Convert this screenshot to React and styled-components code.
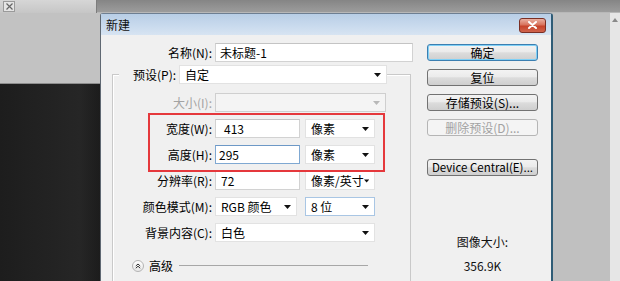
import React from "react";
import styled, { createGlobalStyle, css } from "styled-components";

const GlobalStyle = createGlobalStyle`
  html, body { margin: 0; padding: 0; width: 620px; height: 281px; overflow: hidden; background: #c0c0c0; }
  body { font-family: "Noto Sans CJK SC", "Noto Sans", sans-serif; font-size: 12px; color: #000; }
  * { box-sizing: border-box; }
`;

const Page = styled.div`
  width: 620px;
  height: 281px;
  display: flex;
  flex-direction: column;
  overflow: hidden;
`;

const TopStrip = styled.div`
  height: 13px;
  display: flex;
  flex: none;
`;

const TopLeft = styled.div`
  width: 97px;
  background: linear-gradient(#d6d6d6, #c6c6c6);
  padding: 1px 0 0 3px;
  border-right: 1px solid #7d7d7d;
`;

const TopRest = styled.div`
  flex: 1;
  background: linear-gradient(#858585, #9c9c9c);
  border-bottom: 1px solid #b8b8b8;
`;

const TinyClose = styled.div`
  width: 12px;
  height: 11px;
  border: 1px solid #9a9a9a;
  background: #e4e4e4;
  display: flex;
  align-items: center;
  justify-content: center;
`;

const Main = styled.div`
  flex: 1;
  display: flex;
  min-height: 0;
`;

const LeftPane = styled.div`
  width: 100px;
  display: flex;
  flex-direction: column;
`;

const LightArea = styled.div`
  height: 71px;
  background: #c2c2c2;
  border-bottom: 1px solid #8d8d8d;
`;

const DarkArea = styled.div`
  flex: 1;
  background: linear-gradient(90deg, #1d1d1d, #262626 80%, #1c1c1c);
`;

const Dialog = styled.div`
  width: 453px;
  display: flex;
  flex-direction: column;
  background: #f0f0f0;
  border-left: 1px solid #5f6872;
  border-right: 2px solid #2f5c76;
  border-top: 1px solid #6e7f92;
  border-top-left-radius: 3px;
  border-top-right-radius: 3px;
`;

const TitleBar = styled.div`
  height: 21px;
  flex: none;
  display: flex;
  align-items: center;
  justify-content: space-between;
  padding: 0 5px 0 5px;
  background: linear-gradient(#b8cee6, #cadbee 60%, #d7e4f2);
`;

const Title = styled.span`
  font-size: 12px;
  color: #111;
`;

const CloseButton = styled.div`
  width: 27px;
  height: 15px;
  margin-top: 1px;
  border: 1px solid #7a2f24;
  border-radius: 3px;
  background: linear-gradient(#eab0a2, #d8735d 45%, #c7432b 55%, #d0644c);
  display: flex;
  align-items: center;
  justify-content: center;
`;

const Body = styled.div`
  flex: 1;
  display: flex;
  padding-top: 8px;
  min-height: 0;
`;

const FormCol = styled.div`
  width: 320px;
  display: flex;
  flex-direction: column;
`;

const Row = styled.div`
  display: flex;
  align-items: center;
  height: 19px;
  margin-top: ${(p) => p.$mt || 0}px;
`;

const Label = styled.div`
  width: ${(p) => p.$w}px;
  flex: none;
  text-align: right;
  margin-right: 3px;
  white-space: nowrap;
  color: ${(p) => (p.$disabled ? "#a3a3a3" : "#000")};
  line-height: 19px;
`;

const fieldBase = css`
  height: 19px;
  flex: none;
  background: #fff;
  line-height: 17px;
  white-space: nowrap;
`;

const TextField = styled.div`
  ${fieldBase};
  width: ${(p) => p.$w}px;
  padding-left: ${(p) => p.$indent ?? 4}px;
  border: 1px solid ${(p) => (p.$focus ? "#7fa8d2" : "#d2d2d2")};
  border-top-color: ${(p) => (p.$focus ? "#6d98c6" : "#c4c4c4")};
`;

const SelectBox = styled.div`
  ${fieldBase};
  width: ${(p) => p.$w}px;
  margin-left: ${(p) => p.$ml || 0}px;
  display: flex;
  align-items: center;
  justify-content: space-between;
  padding: 0 5px 0 5px;
  border: 1px solid ${(p) => (p.$focus ? "#a9c6e4" : "#e2e2e2")};
  background: ${(p) => (p.$disabled ? "#f4f4f4" : "#fff")};
  ${(p) =>
    p.$disabled &&
    css`
      border-color: #cfcfcf;
    `}
`;

const GroupBox = styled.div`
  margin: 12px 0 0 11px;
  width: 299px;
  border: 1px solid #c9c9c9;
  box-shadow: inset 1px 1px 0 #fff;
  padding-bottom: 40px;
  display: flex;
  flex-direction: column;
`;

const Legend = styled.div`
  display: flex;
  align-items: center;
  height: 19px;
  margin: -10px 0 0 6px;
  padding-left: 14px;
  width: fit-content;
  background: #f0f0f0;
`;

const LegendLabel = styled.span`
  margin-right: 3px;
  white-space: nowrap;
`;

const Highlight = styled.div`
  position: relative;
  margin-top: 7px;
  display: flex;
  flex-direction: column;
  gap: 7px;
  &::after {
    content: "";
    position: absolute;
    top: -6px;
    left: 35px;
    width: 233px;
    height: 55px;
    border: 2px solid #e5383c;
    pointer-events: none;
  }
`;

const AdvancedRow = styled.div`
  display: flex;
  align-items: center;
  height: 19px;
  margin: 14px 0 0 19px;
`;

const RoundButton = styled.div`
  width: 12px;
  height: 12px;
  border-radius: 50%;
  border: 1px solid #b4b4b4;
  background: linear-gradient(#ffffff, #e6e6e6);
  display: flex;
  align-items: center;
  justify-content: center;
  margin-right: 5px;
`;

const Rule = styled.div`
  width: 189px;
  height: 1px;
  margin-left: 6px;
  background: #a7a7a7;
`;

const ButtonCol = styled.div`
  width: 111px;
  margin-left: 6px;
  display: flex;
  flex-direction: column;
  align-items: stretch;
`;

const Button = styled.div`
  height: 17px;
  margin-top: ${(p) => p.$mt || 0}px;
  border: 1px solid #727272;
  border-radius: 3px;
  background: linear-gradient(#f3f3f3, #ebebeb 45%, #dcdcdc 52%, #cfcfcf);
  text-align: center;
  line-height: 15px;
  font-size: ${(p) => p.$size || 12}px;
  white-space: nowrap;
  color: #000;
  ${(p) =>
    p.$primary &&
    css`
      border-color: #3c7fb1;
      box-shadow: inset 0 0 0 1px #7fd0f6;
    `}
  ${(p) =>
    p.$disabled &&
    css`
      border-color: #b5b5b5;
      background: #f4f4f4;
      color: #a2a2a2;
    `}
`;

const Info = styled.div`
  margin-top: ${(p) => p.$mt}px;
  text-align: center;
  line-height: 16px;
  color: #111;
`;

const RightPane = styled.div`
  width: 57px;
  background: #c0c0c0;
`;

const Scroll = styled.div`
  width: 10px;
  background: #e6e6e6;
  display: flex;
  justify-content: center;
  padding-top: 5px;
`;

const Arrow = ({ disabled }) => (
  <svg width="7" height="4" viewBox="0 0 7 4">
    <path d="M0 0H7L3.5 4Z" fill={disabled ? "#b8b8b8" : "#111"} />
  </svg>
);

const Select = ({ w, children, ...rest }) => (
  <SelectBox $w={w} {...rest}>
    <span>{children}</span>
    <Arrow disabled={rest.$disabled} />
  </SelectBox>
);

export default function App() {
  return (
    <Page>
      <GlobalStyle />
      <TopStrip>
        <TopLeft>
          <TinyClose>
            <svg width="7" height="7" viewBox="0 0 7 7">
              <path d="M0.5 0.5L6.5 6.5M6.5 0.5L0.5 6.5" stroke="#666" strokeWidth="1.2" />
            </svg>
          </TinyClose>
        </TopLeft>
        <TopRest />
      </TopStrip>
      <Main>
        <LeftPane>
          <LightArea />
          <DarkArea />
        </LeftPane>
        <Dialog>
          <TitleBar>
            <Title>新建</Title>
            <CloseButton>
              <svg width="9" height="8" viewBox="0 0 9 8">
                <path d="M1 1L8 7M8 1L1 7" stroke="#fff" strokeWidth="2" strokeLinecap="round" />
              </svg>
            </CloseButton>
          </TitleBar>
          <Body>
            <FormCol>
              <Row>
                <Label $w={111}>名称(N):</Label>
                <TextField $w={198}>未标题-1</TextField>
              </Row>
              <GroupBox>
                <Legend>
                  <LegendLabel>预设(P):</LegendLabel>
                  <Select w={208}>自定</Select>
                </Legend>
                <Row $mt={9}>
                  <Label $w={99} $disabled>大小(I):</Label>
                  <Select w={171} $disabled>{""}</Select>
                </Row>
                <Highlight>
                  <Row>
                    <Label $w={99}>宽度(W):</Label>
                    <TextField $w={85} $indent={8}>413</TextField>
                    <Select w={70} $ml={5}>像素</Select>
                  </Row>
                  <Row>
                    <Label $w={99}>高度(H):</Label>
                    <TextField $w={85} $indent={3} $focus>295</TextField>
                    <Select w={70} $ml={5}>像素</Select>
                  </Row>
                </Highlight>
                <Row $mt={7}>
                  <Label $w={99}>分辨率(R):</Label>
                  <TextField $w={85} $indent={5}>72</TextField>
                  <Select w={70} $ml={5}>像素/英寸</Select>
                </Row>
                <Row $mt={7}>
                  <Label $w={99}>颜色模式(M):</Label>
                  <Select w={82}>RGB 颜色</Select>
                  <Select w={70} $ml={8} $focus>8 位</Select>
                </Row>
                <Row $mt={7}>
                  <Label $w={99}>背景内容(C):</Label>
                  <Select w={160}>白色</Select>
                </Row>
                <AdvancedRow>
                  <RoundButton>
                    <svg width="6" height="6" viewBox="0 0 6 6">
                      <path d="M0.8 3L3 1L5.2 3M0.8 5.2L3 3.2L5.2 5.2" stroke="#333" strokeWidth="1" fill="none" />
                    </svg>
                  </RoundButton>
                  <span>高级</span>
                  <Rule />
                </AdvancedRow>
              </GroupBox>
            </FormCol>
            <ButtonCol>
              <Button $mt={1} $primary>确定</Button>
              <Button $mt={8}>复位</Button>
              <Button $mt={8}>存储预设(S)...</Button>
              <Button $mt={8} $disabled>删除预设(D)...</Button>
              <Button $mt={23} $size={11.5}>Device Central(E)...</Button>
              <Info $mt={58}>图像大小:</Info>
              <Info $mt={8}>356.9K</Info>
            </ButtonCol>
          </Body>
        </Dialog>
        <RightPane />
        <Scroll>
          <svg width="6" height="4" viewBox="0 0 6 4">
            <path d="M0 4H6L3 0Z" fill="#8a8a8a" />
          </svg>
        </Scroll>
      </Main>
    </Page>
  );
}
